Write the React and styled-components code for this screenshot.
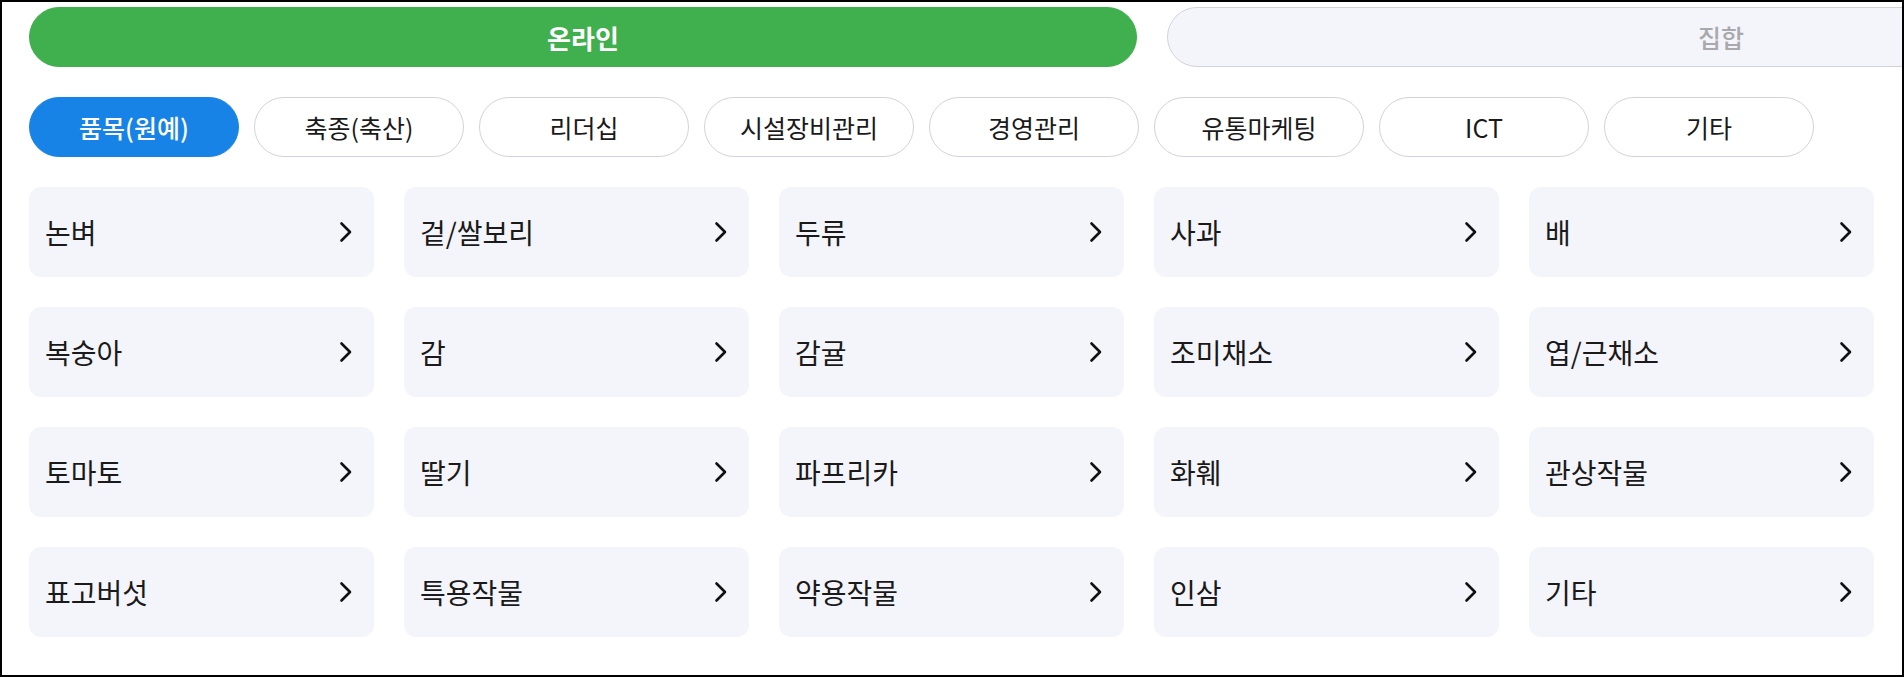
import React, { useState } from 'react';
import styled, { createGlobalStyle } from 'styled-components';

const GlobalStyle = createGlobalStyle`
  html, body {
    margin: 0;
    padding: 0;
    background: #ffffff;
  }
  * {
    box-sizing: border-box;
  }
`;

const Frame = styled.div`
  width: 1904px;
  height: 677px;
  border: 2px solid #000;
  overflow: hidden;
  background: #fff;
  font-family: "Noto Sans CJK KR", "Noto Sans", sans-serif;
`;

const Inner = styled.div`
  padding: 5px 0 0 27px;
  display: flex;
  flex-direction: column;
  gap: 30px;
`;

const TabRow = styled.div`
  display: grid;
  grid-template-columns: 1108px 1108px;
  gap: 30px;
`;

const Tab = styled.button`
  height: 60px;
  border-radius: 30px;
  border: 1px solid ${(p) => (p.active ? '#40af4d' : '#d2d3da')};
  background: ${(p) => (p.active ? '#40af4d' : '#f4f5fa')};
  color: ${(p) => (p.active ? '#ffffff' : '#a9a9ad')};
  font-family: inherit;
  font-size: ${(p) => (p.active ? '26px' : '25px')};
  font-weight: ${(p) => (p.active ? 700 : 500)};
  display: flex;
  align-items: center;
  justify-content: center;
  padding: 0;
  cursor: pointer;
`;

const PillRow = styled.div`
  display: flex;
  gap: 15px;
`;

const Pill = styled.button`
  width: 210px;
  height: 60px;
  border-radius: 30px;
  border: 1px solid ${(p) => (p.active ? '#1883e6' : '#d2d3da')};
  background: ${(p) => (p.active ? '#1883e6' : '#ffffff')};
  color: ${(p) => (p.active ? '#ffffff' : '#1a1a1a')};
  font-family: inherit;
  font-size: 25px;
  font-weight: ${(p) => (p.active ? 500 : 400)};
  padding: 0;
  cursor: pointer;
`;

const Grid = styled.div`
  display: grid;
  grid-template-columns: repeat(5, 345px);
  grid-auto-rows: 90px;
  gap: 30px;
`;

const Card = styled.a`
  display: flex;
  align-items: center;
  justify-content: space-between;
  padding: 0 21px 0 16px;
  background: #f4f5fa;
  border-radius: 12px;
  color: #1a1a1a;
  font-size: 28px;
  text-decoration: none;
  cursor: pointer;
`;

const Chevron = () => (
  <svg width="14" height="22" viewBox="0 0 14 22" fill="none">
    <path d="M2.5 2.5 L11 11 L2.5 19.5" stroke="#111" strokeWidth="2.6" strokeLinecap="round" strokeLinejoin="round" />
  </svg>
);

const categories = ['품목(원예)', '축종(축산)', '리더십', '시설장비관리', '경영관리', '유통마케팅', 'ICT', '기타'];

const items = [
  '논벼', '겉/쌀보리', '두류', '사과', '배',
  '복숭아', '감', '감귤', '조미채소', '엽/근채소',
  '토마토', '딸기', '파프리카', '화훼', '관상작물',
  '표고버섯', '특용작물', '약용작물', '인삼', '기타',
];

const App = () => {
  const [mode, setMode] = useState('online');
  const [category, setCategory] = useState(0);

  return (
    <>
      <GlobalStyle />
      <Frame>
        <Inner>
          <TabRow>
            <Tab active={mode === 'online'} onClick={() => setMode('online')}>온라인</Tab>
            <Tab active={mode === 'offline'} onClick={() => setMode('offline')}>집합</Tab>
          </TabRow>
          <PillRow>
            {categories.map((c, i) => (
              <Pill key={c} active={category === i} onClick={() => setCategory(i)}>{c}</Pill>
            ))}
          </PillRow>
          <Grid>
            {items.map((name, i) => (
              <Card key={i}>
                <span>{name}</span>
                <Chevron />
              </Card>
            ))}
          </Grid>
        </Inner>
      </Frame>
    </>
  );
};

export default App;
